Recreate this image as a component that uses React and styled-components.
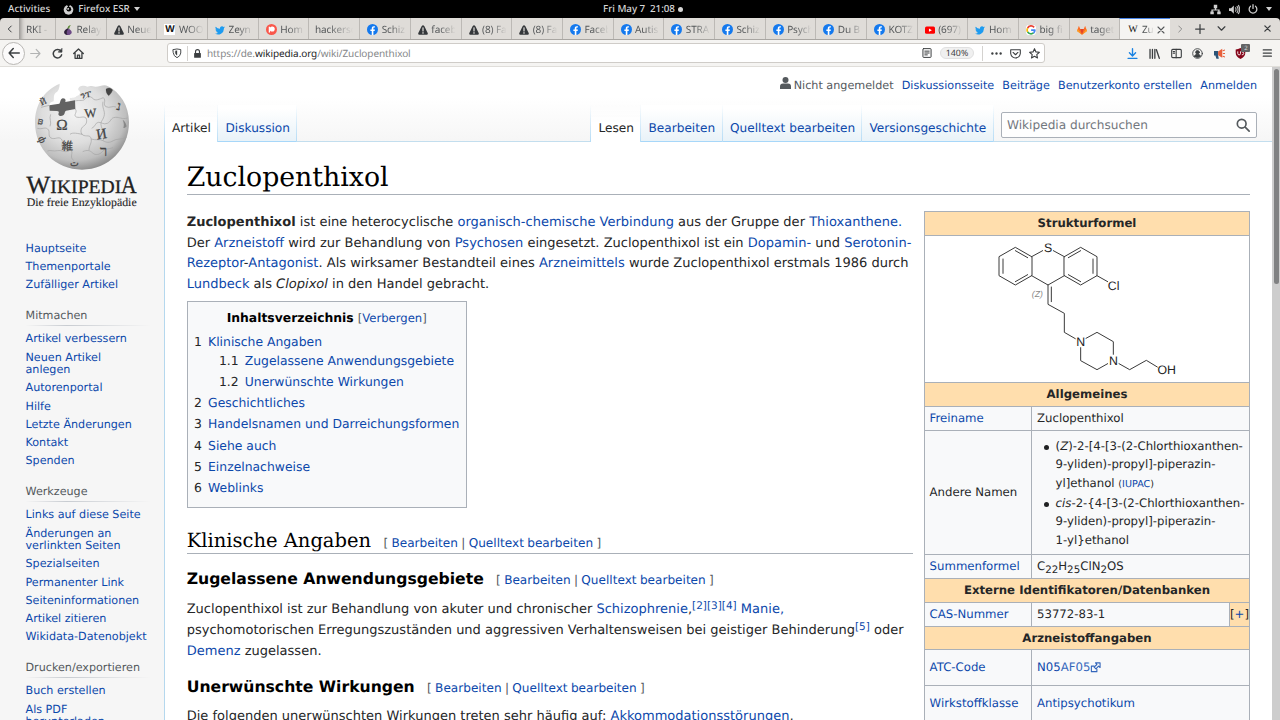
import React from "react";
import styled, { createGlobalStyle, css } from "styled-components";

const LINK = "#0c48ab";
const LINE = "#aab0b8";

const Global = createGlobalStyle`
  * { box-sizing: border-box; }
  html, body { margin: 0; padding: 0; overflow: hidden; background: #f6f6f6; }
  body { font-family: "DejaVu Sans", sans-serif; color: #252627; text-rendering: geometricPrecision; }
  ul, ol, p, h1, h2, h3 { margin: 0; padding: 0; font-weight: normal; list-style: none; }
`;

const Screen = styled.div`
  width: 1280px; height: 720px; overflow: hidden;
  display: flex; flex-direction: column; background: #000;
`;

/* ---------- desktop bar ---------- */
const TopBar = styled.header`
  height: 18px; flex: none; display: grid; grid-template-columns: 1fr auto 1fr;
  align-items: center; padding: 0 8px; background: #000; color: #d6d6d6;
  font: 500 9.8px/18px "Noto Sans", sans-serif;
`;
const TopLeft = styled.div`display: flex; align-items: center;`;
const TopClock = styled.div`
  display: flex; align-items: center; white-space: pre; padding-left: 6px;
  letter-spacing: ${(p) => p.$ls || 0}px;
`;
const TopRight = styled.div`display: flex; justify-content: flex-end; align-items: center; gap: 8px;`;
const TopText = styled.span`margin-left: ${(p) => p.$left || 0}px; letter-spacing: ${(p) => p.$ls || 0}px;`;
const Dot = styled.i`width: 5px; height: 5px; border-radius: 50%; background: #d6d6d6; margin-left: 3px;`;
const Caret = styled.i`
  border: 3px solid transparent; border-top: 4px solid #d0d0d0; border-bottom: 0;
  margin-left: ${(p) => p.$left || 0}px;
`;

/* ---------- browser tabs ---------- */
const TabStrip = styled.div`
  height: 22px; flex: none; display: flex; background: #dfdcd8; border-bottom: 1px solid #a9a6a2;
  border-radius: 4px 4px 0 0; font: 10px/21px "Noto Sans", sans-serif; color: #55585a; overflow: hidden;
`;
const StripButton = styled.div`
  width: ${(p) => p.$w}px; display: flex; align-items: center; justify-content: center; color: #3c3f41;
`;
const Spacer = styled.div`flex: 1;`;
const BrowserTab = styled.div`
  width: ${(p) => p.$w || 50.7}px; flex: none; height: 22px; display: flex; align-items: center; gap: 3.5px;
  padding: 1px 0 0 ${(p) => p.$pad || 7}px; border-left: 1px solid #bcb9b5; overflow: hidden; white-space: nowrap;
  ${(p) => p.$first && css`border-left: 0; box-shadow: inset 5px 0 4px -3px #8d8b88;`}
  ${(p) => p.$active && css`background: #f5f4f2; border-top: 1.5px solid #4a86e8; padding-top: 0;`}
`;
const TabLabel = styled.span`
  width: ${(p) => p.$w || 24}px; overflow: hidden; flex: none; letter-spacing: -0.1px;
  mask-image: linear-gradient(90deg, #000 35%, transparent 98%);
`;

/* ---------- browser toolbar ---------- */
const Toolbar = styled.div`
  height: 27px; flex: none; display: flex; align-items: center; background: #f5f4f2;
  border-bottom: 1px solid #e0deda; padding: 0 8px 0 2px; color: #3c3f41;
`;
const BackButton = styled.div`
  width: 23px; height: 23px; border-radius: 50%; border: 1px solid #b9b7b4; background: #fbfafa;
  display: flex; align-items: center; justify-content: center;
`;
const NavIcon = styled.div`display: flex; margin-left: ${(p) => p.$left}px; color: ${(p) => p.$color || "inherit"};`;
const UrlBar = styled.div`
  width: 878px; height: 20px; margin-left: 83px; display: flex; align-items: center; background: #fff;
  border: 1px solid #cfccc8; border-radius: 3px; padding: 0 4px 0 3.5px;
`;
const Divider = styled.i`width: 1px; height: 15px; background: #d4d2cf; margin: 0 ${(p) => p.$m}px;`;
const UrlText = styled.div`
  flex: 1; margin-left: 5.5px; font: 10px/18px "Noto Sans", sans-serif; color: #858789; letter-spacing: ${(p) => p.$ls}px;
  b { font-weight: 400; color: #1c1d1e; }
`;
const ZoomPill = styled.div`
  width: 34px; height: 12px; border-radius: 6px; background: #f0f0f0; border: 1px solid #e0e0e0;
  font: 8.8px/10px "Noto Sans", sans-serif; text-align: center; color: #3a3c3e; margin-left: 8px;
`;
const ToolIcons = styled.div`display: flex; align-items: center; gap: 10.6px; margin-left: auto;`;
const BadgeHost = styled.div`position: relative; display: flex;`;
const Badge = styled.span`
  position: absolute; left: 6px; top: -4px; width: 9px; height: 8px; background: #626466; color: #ddd;
  font: 6px/8px "Noto Sans", sans-serif; text-align: center; border-radius: 1px;
`;

/* ---------- page frame ---------- */
const Page = styled.div`flex: 1; min-height: 0; display: flex; background: #f6f6f6;`;
const Backdrop = styled.div`
  flex: 1; min-width: 0; display: flex; overflow: hidden;
  background: linear-gradient(180deg, #fff 30px, #f6f6f6 74px);
`;
const ScrollTrack = styled.div`width: 8px; background: #cdcdcd; padding: 2px 1px 0 2px;`;
const ScrollThumb = styled.div`height: 215px; background: #808182; border-radius: 3px;`;

/* ---------- sidebar ---------- */
const Sidebar = styled.nav`
  width: 164px; flex: none; padding-left: 20px; font-size: 11.17px; line-height: 12.6px; color: ${LINK};
  display: flex; flex-direction: column;
`;
const Logo = styled.svg`width: 125px; height: 140px; flex: none; margin-top: 8px; display: block;`;
const SideGroup = styled.div`padding-left: 5.5px; margin-top: ${(p) => p.$top}px;`;
const SideTitle = styled.div`
  width: 124px; color: #54595d; line-height: 16px; padding-bottom: 1.4px; margin-bottom: 7.3px; height: 18px;
  border-bottom: 1px solid; border-image: linear-gradient(90deg, #c8ccd100, #c8ccd1 33%, #c8ccd100) 1;
`;
const SideLink = styled.div`padding-bottom: 5.6px; white-space: pre;`;

/* ---------- head of the article area ---------- */
const Main = styled.div`flex: 1; min-width: 0; display: flex; flex-direction: column;`;
const Personal = styled.div`
  height: 38px; flex: none; padding: 10px 15px 0 0; display: flex; justify-content: flex-end; gap: 8.2px;
  font-size: 11.2px; line-height: 18px; color: ${LINK};
`;
const Anonymous = styled.span`color: #54595d; display: flex; gap: 3px; svg { margin-top: 0; }`;
const HeadBar = styled.div`
  height: 37px; flex: none; display: flex; font-size: 12.13px; color: ${LINK};
  background: linear-gradient(#c3deee, #c3deee) bottom / 100% 1px no-repeat;
`;
const PageTab = styled.div`
  width: ${(p) => p.$w}px; flex: none; height: 37px; padding: 13px 0 0 ${(p) => p.$pad || 7.5}px; line-height: 20px;
  white-space: nowrap;
  border-right: 1px solid; border-image: linear-gradient(180deg, #b5dcf600, #b5dcf6) 1;
  background: linear-gradient(#a7d7f9, #a7d7f9) bottom / 100% 1px no-repeat, linear-gradient(180deg, #ffffff 10%, #e8f2f8);
  ${(p) => p.$active && css`color: #252627; background: linear-gradient(180deg, #ffffff00, #fff 50%);`}
`;
const EdgeLine = styled.i`width: 1px; flex: none; background: linear-gradient(180deg, #b5dcf600, #b5dcf6);`;
const Search = styled.div`
  width: 256px; height: 26px; margin: 7px 15px 0 7px; border: 1px solid ${LINE}; border-radius: 2px; background: #ffffffcc;
  display: flex; align-items: center; justify-content: space-between; padding: 0 6px 0 5px; color: #72777d;
  font-size: 12.13px;
`;
const Content = styled.main`
  flex: 1; background: #fff; border-left: 1px solid #b5d8ee; padding: 13px 22px 0 21.7px; min-height: 0; overflow: hidden;
`;
const Title = styled.h1`
  height: 40px; border-bottom: 1px solid ${LINE}; font: 26.75px/45px "DejaVu Serif", serif; color: #000;
`;
const Columns = styled.div`display: flex; justify-content: space-between; padding-top: 16px;`;
const Article = styled.div`width: 726px; padding-top: 1.7px; font-size: 13.03px; line-height: 20.9px; white-space: nowrap;`;
const Line = styled.p`height: 20.9px;`;
const Paragraph = styled.div`margin-top: ${(p) => p.$top || 0}px;`;
const A = styled.span`color: ${(p) => p.$color || LINK};`;
const Ref = styled.sup`font-size: 10.5px; line-height: 1; vertical-align: 4.5px; color: ${LINK};`;

const Toc = styled.section`
  width: 280px; height: 207px; margin-top: 4.7px; padding: 6px 6.3px; background: #f8f9fa; border: 1px solid ${LINE};
  font-size: 12.38px;
`;
const TocTitle = styled.div`text-align: center; height: 23.6px; color: #000;`;
const Toggle = styled.span`font-size: 11.64px; color: #54595d;`;
const TocItem = styled.div`
  height: ${(p) => p.$h || 21.1}px; padding-left: ${(p) => (p.$sub ? 24.9 : 0)}px; display: flex; gap: 6.2px;
`;

const H2 = styled.h2`
  height: 33px; margin-top: 13px; border-bottom: 1px solid ${LINE}; display: flex; align-items: baseline;
  font: 19.5px/40px "DejaVu Serif", serif; color: #000;
`;
const H3 = styled.h3`
  height: 30px; margin-top: ${(p) => p.$top}px; display: flex; align-items: baseline;
  font: bold 15.65px/30px "DejaVu Sans", sans-serif; color: #000;
`;
const Edit = styled.span`
  font: 12.1px/20px "DejaVu Sans", sans-serif; color: #54595d; margin-left: 12.3px; word-spacing: -0.5px;
`;

/* ---------- infobox ---------- */
const Infobox = styled.aside`
  width: 326px; flex: none; border: 1px solid ${LINE}; background: #f8f9fa; font-size: 11.72px; line-height: 18.8px;
`;
const Band = styled.div`
  height: ${(p) => p.$h || 24}px; border-bottom: 1px solid ${LINE}; background: #ffdead; font-weight: bold;
  display: flex; align-items: center; justify-content: center;
`;
const Figure = styled.div`height: 147px; border-bottom: 1px solid ${LINE}; background: #fff; svg { display: block; }`;
const Row = styled.div`
  height: ${(p) => p.$h || 24}px; border-bottom: 1px solid ${LINE}; display: flex;
`;
const Key = styled.div`
  width: 107px; border-right: 1px solid ${LINE}; padding-left: 4.6px; display: flex; align-items: center;
  color: ${(p) => (p.$plain ? "inherit" : LINK)};
`;
const Value = styled.div`
  flex: 1; padding-left: 5px; display: flex; align-items: center; white-space: nowrap;
  sub { font-size: 10.3px; line-height: 1; vertical-align: -3.2px; }
`;
const Expand = styled.div`
  width: 20px; border-left: 1px solid ${LINE}; background: #ffdead; display: flex; align-items: center; justify-content: center;
`;
const Names = styled.ul`padding: 2px 0 0 18.6px;`;
const Name = styled.li`
  line-height: 18.75px; padding-bottom: 0.6px; white-space: pre;
  &::before { content: ""; float: left; width: 5px; height: 5px; border-radius: 50%; background: #202122; margin: 8px 0 0 -11.5px; }
`;
const Small = styled.span`font-size: 9.6px; line-height: 1;`;

/* ---------- icons ---------- */
const Ic = ({ s = 12, v = 16, w = 1.6, children, ...r }) => (
  <svg width={s} height={s} viewBox={`0 0 ${v} ${v}`} fill="none" stroke="currentColor" strokeWidth={w} strokeLinecap="round" strokeLinejoin="round" {...r}>{children}</svg>
);

const icons = {
  onion: (
    <Ic s={10} stroke="none">
      <path d="M8 5C4 7 2 8 2 11.500C2 14.500 5 16 8 16s6-1.500 6-4.500C14 8 10 7.500 9.500 5z" fill="#6d4a86" />
      <path d="M8 7C5.500 9 5 13 7.500 16C3 15.500 2 13 2 11.500C2 8 5 7 8 5z" fill="#2c2035" />
      <path d="M7.500 5.500C7 3 9 1 12.500 0C11 2 10 4 9.800 6z" fill="#5e8a3a" />
    </Ic>
  ),
  warn: (
    <Ic s={10} stroke="none">
      <path d="M6 1.500Q8-.5 10 1.500L15.700 13Q16 15.500 14 15.500H2Q0 15.500.3 13z" fill="#34373a" />
      <path d="M8 4.500v5M8 12v1" stroke="#dfdcd8" strokeWidth="2" />
    </Ic>
  ),
  facebook: (
    <Ic s={11} stroke="none">
      <circle cx="8" cy="8" r="8" fill="#1479ee" />
      <path d="M6.900 16V10.300H4.900V8h2V6.200C6.900 4.200 8.100 3.100 9.900 3.100c.8 0 1.600.15 1.600.15v1.900h-.9c-1 0-1.300.6-1.300 1.200V8h2.200l-.35 2.300H9.300V16z" fill="#fff" />
    </Ic>
  ),
  twitter: (
    <Ic s={10} stroke="none">
      <path d="M16 3.500a6 6 0 0 1-1.800.5A3.300 3.300 0 0 0 15.600 2.200a6 6 0 0 1-2 .8 3.300 3.300 0 0 0-5.600 3A9.300 9.300 0 0 1 1.200 2.600 3.300 3.300 0 0 0 2.200 7 3 3 0 0 1 .7 6.600c0 1.600 1.100 3 2.600 3.300a3 3 0 0 1-1.500 0 3.300 3.300 0 0 0 3 2.300A6.600 6.600 0 0 1 0 13.600 9.300 9.300 0 0 0 14.300 5.300 7 7 0 0 0 16 3.500z" fill="#1d9bf0" />
    </Ic>
  ),
  patreon: (
    <Ic s={11} stroke="none">
      <circle cx="8" cy="8" r="8" fill="#f9574b" />
      <circle cx="9" cy="7.300" r="3.700" fill="#fff" /><path d="M4 4h1.800v8.500H4z" fill="#fff" />
    </Ic>
  ),
  youtube: (
    <Ic s={10} stroke="none">
      <rect x="0" y="2.500" width="16" height="11.500" rx="2.500" fill="#f00" /><path d="M6.300 5.500v5.200L11 8.200z" fill="#fff" />
    </Ic>
  ),
  google: (
    <Ic s={10} w={2.800} strokeLinecap="butt">
      <rect x="-1" y="-1" width="18" height="18" rx="8" fill="#fff" stroke="none" />
      <path d="M13 3.700A6.300 6.300 0 0 0 2.600 5" stroke="#ea4335" /><path d="M2.600 5a6.300 6.300 0 0 0 0 6" stroke="#fbbc05" />
      <path d="M2.600 11A6.300 6.300 0 0 0 12 12.700" stroke="#34a853" /><path d="M12 12.700Q14.200 11 14.200 8H8.200" stroke="#4285f4" />
    </Ic>
  ),
  gitlab: (
    <Ic s={10} stroke="none">
      <path d="M8 15.500L0 9.500 3 1l2.200 5.500h5.600L13 1l3 8.500z" fill="#fc6d26" />
      <path d="M8 15.500L5.200 6.500h5.600z" fill="#e24329" /><path d="M0 9.500l1.200-3 6.800 9zM16 9.500l-1.200-3-6.800 9z" fill="#fca326" />
    </Ic>
  ),
};

const WMark = styled.span`
  width: 11px; flex: none; text-align: center; color: #111; background: ${(p) => (p.$box ? "#fff" : "none")};
  font: ${(p) => (p.$box ? 'bold 10px/11px "Liberation Sans", sans-serif' : '10px/12px "Liberation Serif", serif')};
`;

const tabs = [
  ["onion", "Relay"], ["warn", "Neue"], ["wbox", "WOO"], ["twitter", "Zeyn"], ["patreon", "Hom"], [null, "hackersc"],
  ["facebook", "Schiz"], ["warn", "faceb"], ["warn", "(8) Fa"], ["warn", "(8) Fa"], ["facebook", "Faceb"],
  ["facebook", "Autis"], ["facebook", "STRA"], ["facebook", "Schiz"], ["facebook", "Psych"], ["facebook", "Du B"],
  ["facebook", "KOTZ"], ["youtube", "(697)"], ["twitter", "Hom"], ["google", "big fi"], ["gitlab", "taget"],
];

const Chrome = () => (
  <>
    <TopBar>
      <TopLeft>
        <TopText $ls={0}>Activities</TopText>
        <NavIcon $left={13}>
          <Ic s={11} stroke="none">
            <circle cx="8" cy="8.500" r="7" fill="#d0d0d0" /><circle cx="8.500" cy="7.500" r="3.400" fill="#000" />
            <path d="M5 0L11 0 8 5z" fill="#000" /><path d="M5 7l4-1.500L8 9z" fill="#d0d0d0" />
          </Ic>
        </NavIcon>
        <TopText $left={4} $ls={0}>Firefox ESR</TopText>
        <Caret $left={4} />
      </TopLeft>
      <TopClock $ls={-0.05}>Fri May 7  21:08<Dot /></TopClock>
      <TopRight>
        <Ic s={11} stroke="none"><path d="M5.500 1h5v5H9v2h5v3h1.500v4h-5v-4H12V9.500H4V11h1.500v4H.5v-4H2V8h5V6H5.500z" fill="#d0d0d0" /></Ic>
        <Ic s={11}><path d="M0 6h3l4-4v12l-4-4H0z" fill="#d0d0d0" stroke="none" /><path d="M9.500 5.500q1.500 2.500 0 5M11.700 3.500q3 4.500 0 9M13.800 2q3.500 6 0 12" stroke="#c0c0c0" /></Ic>
        <Ic s={10} w={2}><path d="M4 3.500a6.200 6.200 0 1 0 8 0M8 1v6" stroke="#d0d0d0" /></Ic>
        <Caret />
      </TopRight>
    </TopBar>
    <TabStrip>
      <StripButton $w={19}><Ic s={8} w={2}><path d="M10.500 2l-6 6 6 6" /></Ic></StripButton>
      <BrowserTab $first $w={36}><TabLabel>RKI -</TabLabel></BrowserTab>
      {tabs.map(([icon, label], i) => (
        <BrowserTab key={i} $pad={icon ? 7 : 5.5}>
          {icon === "wbox" ? <WMark $box>W</WMark> : icon && icons[icon]}
          <TabLabel $w={icon ? 25 : 39}>{label}</TabLabel>
        </BrowserTab>
      ))}
      <BrowserTab $active $w={51}>
        <WMark>W</WMark><TabLabel $w={12}>Zu</TabLabel><Ic s={8} w={2.200}><path d="M2 2l12 12M14 2L2 14" /></Ic>
      </BrowserTab>
      <StripButton $w={20}><Ic s={8} w={2} opacity=".5"><path d="M5.500 2l6 6-6 6" /></Ic></StripButton>
      <StripButton $w={20}><Ic s={10} w={2}><path d="M1 8h14M8 1v14" /></Ic></StripButton>
      <StripButton $w={22}><Ic s={9} w={2.200}><path d="M2 5l6 6 6-6" /></Ic></StripButton>
      <Spacer />
      <StripButton $w={25}><Ic s={7} w={3}><path d="M2 2l12 12M14 2L2 14" /></Ic></StripButton>
    </TabStrip>
    <Toolbar>
      <BackButton><Ic s={12} w={2}><path d="M15 8H1.500M7 2L1.500 8 7 14" /></Ic></BackButton>
      <NavIcon $left={5} $color="#b2b3b3"><Ic s={11} w={1.700}><path d="M1 8h13.500M9 2l5.500 6L9 14" /></Ic></NavIcon>
      <NavIcon $left={11}><Ic s={11} w={2.200}><path d="M13 4.500A6.200 6.200 0 1 0 14 10" /><path d="M14.500 1v5h-5z" fill="currentColor" strokeWidth="1" /></Ic></NavIcon>
      <NavIcon $left={10}><Ic s={11} w={1.900}><path d="M1 8l7-6.500L15 8M3 7.500V15h10V7.500" /><path d="M6.500 15v-4.500h3V15" /></Ic></NavIcon>
      <UrlBar>
        <Ic s={10} w={1.500}><path d="M2 2.500Q8 .5 14 2.500V8q-.5 5-6 7.500Q2.500 13 2 8z" /><path d="M8 4.500v7q-2.300-1.300-2.700-3.500V5z" fill="currentColor" strokeWidth=".5" /></Ic>
        <Divider $m={5} />
        <Ic s={9} w={2}><rect x="2" y="7" width="12" height="8.500" rx="1" fill="currentColor" stroke="none" /><path d="M4.500 7V4.500a3.500 3.500 0 0 1 7 0V7" /></Ic>
        <UrlText $ls={-0.09}>https://de.<b>wikipedia.org</b>/wiki/Zuclopenthixol</UrlText>
        <Ic s={10} w={1.600}><rect x="1.500" y="1" width="13" height="14" rx="1" /><path d="M4.500 5h7M4.500 8h7M4.500 11h4" /></Ic>
        <ZoomPill>140%</ZoomPill>
        <Divider $m={8} />
        <Ic s={11} stroke="none"><g fill="currentColor"><circle cx="2" cy="8" r="1.700" /><circle cx="8" cy="8" r="1.700" /><circle cx="14" cy="8" r="1.700" /></g></Ic>
        <NavIcon $left={8}><Ic s={11}><path d="M1 2.500h14V8q-1 6-7 6.500Q2 14 1 8z" /><path d="M4.500 6.500L8 9.800l3.500-3.300" /></Ic></NavIcon>
        <NavIcon $left={8}><Ic s={11}><path d="M8 1l2.100 4.700 5 .5-3.800 3.400 1.100 5L8 12l-4.400 2.600 1.100-5L.9 6.200l5-.5z" /></Ic></NavIcon>
      </UrlBar>
      <ToolIcons>
        <Ic s={11} w={2}><path d="M8 1v10M3.500 7L8 11.500 12.500 7M1.500 15h13" stroke="#1a82e2" /></Ic>
        <Ic s={11} w={1.900}><path d="M1.500 2v13M5 2v13M8.500 2v13M10.800 2.500L15 15" /></Ic>
        <Ic s={11}><rect x="1" y="2" width="14" height="12" rx="1.500" /><path d="M7.500 2v12M3.200 5h2M3.200 7.500h2" /></Ic>
        <Ic s={11} w={1.300}><circle cx="8" cy="8" r="7" /><circle cx="8" cy="6.200" r="2.600" fill="currentColor" /><path d="M3.500 12q1-3 4.500-3t4.500 3q-4.500 3.500-9 0z" fill="currentColor" /></Ic>
        <Ic s={11} stroke="none"><path d="M0 4.500h6v6.500H0zM2 11h4l1 4.500H3.500z" fill="#2c5478" /><path d="M6 5l6-4v13l-6-3.500z" fill="#e8603c" /><path d="M13 4l3-1M13.500 8H16M13 12l3 1" stroke="#e8603c" strokeWidth="1.500" /></Ic>
        <BadgeHost>
          <Ic s={11} stroke="none"><path d="M8 0q3.500 2 7 2v5q0 6-7 9Q1 13 1 7V2q3.500 0 7-2z" fill="#85061a" /><path d="M4 5.500V8q0 2 2 2t2-2V5.500M10.500 10A2.200 2.200 0 1 0 10.500 5.600" stroke="#fff" strokeWidth="1.300" fill="none" /></Ic>
          <Badge>2</Badge>
        </BadgeHost>
        <NavIcon $left={5}><Ic s={10} w={2}><path d="M2 3h13M2 8h13M2 13h13" /></Ic></NavIcon>
      </ToolIcons>
    </Toolbar>
  </>
);

const GlobeLogo = () => (
  <Logo viewBox="0 0 375 420">
    <defs>
      <radialGradient id="ball" cx="42%" cy="35%" r="68%">
        <stop offset="0" stopColor="#f3f3f3" /><stop offset=".5" stopColor="#dedede" />
        <stop offset=".8" stopColor="#bebebe" /><stop offset="1" stopColor="#848484" />
      </radialGradient>
    </defs>
    <path d="M120 26C68 46 45 95 45 142c0 82 62 142 141 142s141-62 141-142c0-50-27-90-63-108-12-8-26 2-38 1-8 0-12-4-24 0-10-6-30-2-27 10 10 6 4 16-6 19-4 6-14 4-20 6l2 12-62 11c-2-8 2-12 12-14 2-10-2-18 6-26 8-4 12-14 12-27z" fill="url(#ball)" />
    <path d="M88 91l30-5c4-5 2-13 10-16 8 0 10 4 8 11l29-5 1 26-28 5c-5 2-2 8-7 13-7 5-15 4-16-3 3-6 2-9-5-9l-21-1z" fill="#626262" />
    <g fill="none" stroke="#a3a3a3" strokeWidth="2">
      <path d="M88 91l-25 6M166 102c8 10-8 18 3 24 14 4 20-4 29 3 5 12 0 20-8 25s-10 20-2 26c12 6 22-2 25 10 4 14-6 20-6 36M165 78c14-4 25 2 31-7s16-8 23 0 20 1 31-3c10 9-3 21 8 27s19-4 30 1" />
      <path d="M52 160c16 4 22-5 31 2s-1 21 10 27 23-6 31 3-3 20 5 27 23-1 26 9-6 20 6 28M92 118c-6 14 4 22-2 36M150 178c8-7 24-2 38 0M82 228c10-4 18 2 30-1s20 6 34 2M215 160c12-5 10-17 20-18s15 8 27 3 9-17 24-18 18 7 37 2M213 192c16 5 26-1 36 5s20 7 31 0 22-2 40-10M188 230c14-6 22-4 30 4s22 5 29-4 17-7 32-12M249 80c-4 20 8 28 3 44s-12 14-8 30 12 18 6 42" />
    </g>
    <g fill="#444" stroke="#444" strokeWidth=".7" fontFamily="Liberation Serif, DejaVu Serif, serif" fontSize="36" textAnchor="middle">
      <text x="126" y="165" fontSize="46">Ω</text><text x="212" y="127" fontSize="38" transform="rotate(-4 212 126)">W</text>
      <text x="245" y="191" fontSize="44" transform="rotate(-9 245 180)">И</text>
      <text x="142" y="226" fontSize="34" fontFamily="Noto Sans CJK JP, sans-serif">維</text>
      <text x="296" y="106" fontSize="38" transform="rotate(12 296 96)">נ</text><text x="251" y="243" fontSize="44">ר</text>
      <text x="198" y="68" fontSize="27" transform="rotate(-12 198 60)">ንፐ</text><text x="70" y="88" fontSize="26" transform="rotate(-25 70 80)">Й</text>
      <text x="61" y="147" fontSize="27" transform="rotate(-80 61 140)">ϖ</text><text x="66" y="203" fontSize="30" transform="rotate(65 66 194)">ф</text>
      <text x="163" y="273" fontSize="28">ت</text>
      <path d="M258 42q12-8 20 3-4 12-12 17-9-7-8-20z" />
      <path d="M308 134q8 4 12 20-6 8-10 4 4-10-2-24z" fill="#888" stroke="none" />
    </g>
    <g fill="#222" stroke="#222" strokeWidth=".8" fontFamily="Liberation Serif, serif">
      <text x="19" y="354" fontSize="74" textLength="72" lengthAdjust="spacingAndGlyphs">W</text>
      <text x="91" y="354" fontSize="57" textLength="213" lengthAdjust="spacingAndGlyphs">IKIPEDI</text>
      <text x="303" y="354" fontSize="74" textLength="47" lengthAdjust="spacingAndGlyphs">A</text>
      <text x="20" y="392" fontSize="35" strokeWidth=".3" textLength="330" lengthAdjust="spacingAndGlyphs">Die freie Enzyklopädie</text>
    </g>
  </Logo>
);

const groups = [
  { top: 27.6, links: ["Hauptseite", "Themenportale", "Zufälliger Artikel"] },
  { top: 11, title: "Mitmachen", links: ["Artikel verbessern", "Neuen Artikel\nanlegen", "Autorenportal", "Hilfe", "Letzte Änderungen", "Kontakt", "Spenden"] },
  { top: 10.8, title: "Werkzeuge", links: ["Links auf diese Seite", "Änderungen an\nverlinkten Seiten", "Spezialseiten", "Permanenter Link", "Seiteninformationen", "Artikel zitieren", "Wikidata-Datenobjekt"] },
  { top: 10.8, title: "Drucken/exportieren", links: ["Buch erstellen", "Als PDF\nherunterladen"] },
];

const Molecule = () => (
  <svg width="324" height="146" viewBox="15 93 972 438">
    <g fill="none" stroke="#3a3a3a" strokeWidth="3" strokeLinejoin="round" strokeLinecap="round">
      <path d="M335 155L286 127 237 155V212L286 240 335 212zM323 158L286 137M249 162V205M323 209L286 230" />
      <path d="M335 155L368 137M400 137L433 155M335 212L384 240 433 212" />
      <path d="M433 155L482 127 531 155V212L482 240 433 212zM445 158L482 137M519 162V205M445 209L482 230M531 212L563 230" />
      <path d="M384 240V298L433 325V382L466 401M394 246V290" />
      <path d="M498 400L531 382 580 410V448M482 428V467L531 494 563 476M597 476L629 494 679 466 712 486" />
    </g>
    <g fill="#222" fontFamily="Liberation Sans, Arial, sans-serif" fontSize="37" textAnchor="middle">
      <text x="384" y="141">S</text><text x="581" y="255">Cl</text><text x="482" y="423">N</text>
      <text x="580" y="480">N</text><text x="740" y="508">OH</text>
      <text x="352" y="277" fontSize="26" fontStyle="italic" fill="#888">(Z)</text>
    </g>
  </svg>
);

const toc = [
  ["1", "Klinische Angaben", 0, 19.6], ["1.1", "Zugelassene Anwendungsgebiete", 1], ["1.2", "Unerwünschte Wirkungen", 1],
  ["2", "Geschichtliches"], ["3", "Handelsnamen und Darreichungsformen"], ["4", "Siehe auch"], ["5", "Einzelnachweise"], ["6", "Weblinks"],
];

const EditLinks = () => <Edit>[ <A>Bearbeiten</A> | <A>Quelltext bearbeiten</A> ]</Edit>;

export default function App() {
  return (
    <Screen>
      <Global />
      <Chrome />
      <Page>
        <Backdrop>
          <Sidebar>
            <GlobeLogo />
            {groups.map((g, i) => (
              <SideGroup key={i} $top={g.top}>
                {g.title && <SideTitle>{g.title}</SideTitle>}
                {g.links.map((l) => <SideLink key={l}>{l}</SideLink>)}
              </SideGroup>
            ))}
          </Sidebar>
          <Main>
            <Personal>
              <Anonymous>
                <svg width="11" height="12" viewBox="0 0 11 12"><circle cx="5.500" cy="3" r="3" fill="#54595d" /><path d="M0 12V9.500Q0 6.500 3 6.500h5q3 0 3 3V12z" fill="#54595d" /></svg>
                Nicht angemeldet
              </Anonymous>
              <span>Diskussionsseite</span><span>Beiträge</span><span>Benutzerkonto erstellen</span><span>Anmelden</span>
            </Personal>
            <HeadBar>
              <EdgeLine />
              <PageTab $active $w={53} $pad={7}>Artikel</PageTab>
              <PageTab $w={79}>Diskussion</PageTab>
              <Spacer />
              <EdgeLine />
              <PageTab $active $w={50}>Lesen</PageTab>
              <PageTab $w={82}>Bearbeiten</PageTab>
              <PageTab $w={139} $pad={7}>Quelltext bearbeiten</PageTab>
              <PageTab $w={132}>Versionsgeschichte</PageTab>
              <Search>
                Wikipedia durchsuchen
                <Ic s={14} w={1.900} stroke="#54595d"><circle cx="6.500" cy="6.500" r="5" /><path d="M10.500 10.500l4.500 4.500" /></Ic>
              </Search>
            </HeadBar>
            <Content>
              <Title>Zuclopenthixol</Title>
              <Columns>
                <Article>
                  <Line><b>Zuclopenthixol</b> ist eine heterocyclische <A>organisch-chemische Verbindung</A> aus der Gruppe der <A>Thioxanthene.</A></Line>
                  <Line>Der <A>Arzneistoff</A> wird zur Behandlung von <A>Psychosen</A> eingesetzt. Zuclopenthixol ist ein <A>Dopamin-</A> und <A>Serotonin-</A></Line>
                  <Line><A>Rezeptor</A>-<A>Antagonist</A>. Als wirksamer Bestandteil eines <A>Arzneimittels</A> wurde Zuclopenthixol erstmals 1986 durch</Line>
                  <Line><A>Lundbeck</A> als <i>Clopixol</i> in den Handel gebracht.</Line>
                  <Toc>
                    <TocTitle><b>Inhaltsverzeichnis</b> <Toggle>[<A>Verbergen</A>]</Toggle></TocTitle>
                    {toc.map(([n, t, sub, h]) => (
                      <TocItem key={n} $sub={sub} $h={h}><span>{n}</span><A>{t}</A></TocItem>
                    ))}
                  </Toc>
                  <H2>Klinische Angaben<EditLinks /></H2>
                  <H3 $top={10}>Zugelassene Anwendungsgebiete<EditLinks /></H3>
                  <Paragraph $top={5.8}>
                    <Line>Zuclopenthixol ist zur Behandlung von akuter und chronischer <A>Schizophrenie</A>,<Ref>[2][3][4]</Ref> <A>Manie,</A></Line>
                    <Line>psychomotorischen Erregungszuständen und aggressiven Verhaltensweisen bei geistiger Behinderung<Ref>[5]</Ref> oder</Line>
                    <Line><A>Demenz</A> zugelassen.</Line>
                  </Paragraph>
                  <H3 $top={10}>Unerwünschte Wirkungen<EditLinks /></H3>
                  <Paragraph $top={5}>
                    <Line>Die folgenden unerwünschten Wirkungen treten sehr häufig auf: <A>Akkommodationsstörungen</A>,</Line>
                  </Paragraph>
                </Article>
                <Infobox>
                  <Band>Strukturformel</Band>
                  <Figure><Molecule /></Figure>
                  <Band>Allgemeines</Band>
                  <Row><Key>Freiname</Key><Value>Zuclopenthixol</Value></Row>
                  <Row $h={124}>
                    <Key $plain>Andere Namen</Key>
                    <Value>
                      <Names>
                        <Name>(<i>Z</i>)-2-[4-[3-(2-Chlorthioxanthen-{"\n"}9-yliden)-propyl]-piperazin-{"\n"}yl]ethanol <Small>(<A>IUPAC</A>)</Small></Name>
                        <Name><i>cis</i>-2-{"{"}4-[3-(2-Chlorthioxanthen-{"\n"}9-yliden)-propyl]-piperazin-{"\n"}1-yl{"}"}ethanol</Name>
                      </Names>
                    </Value>
                  </Row>
                  <Row><Key>Summenformel</Key><Value><span>C<sub>22</sub>H<sub>25</sub>ClN<sub>2</sub>OS</span></Value></Row>
                  <Band>Externe Identifikatoren/Datenbanken</Band>
                  <Row><Key>CAS-Nummer</Key><Value>53772-83-1</Value><Expand>[<A>+</A>]</Expand></Row>
                  <Band $h={23}>Arzneistoffangaben</Band>
                  <Row $h={36}>
                    <Key>ATC-Code</Key>
                    <Value>
                      <A>N05</A><A $color="#3366bb">AF05</A>
                      <Ic s={11} v={12} w={1.200} stroke="#3366bb"><path d="M4.500 4.500H1.500v6h6V8" /><path d="M6 1h5v5L9.300 4.500 6.500 7.500 4.500 5.500 7.500 2.700z" /></Ic>
                    </Value>
                  </Row>
                  <Row $h={36}><Key>Wirkstoffklasse</Key><Value><A>Antipsychotikum</A></Value></Row>
                </Infobox>
              </Columns>
            </Content>
          </Main>
        </Backdrop>
        <ScrollTrack><ScrollThumb /></ScrollTrack>
      </Page>
    </Screen>
  );
}
